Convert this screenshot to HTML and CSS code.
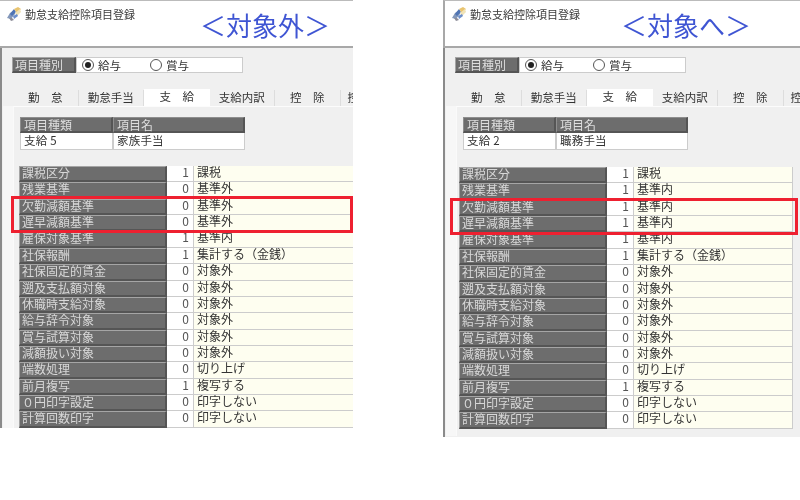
FILE: index.html
```html
<!DOCTYPE html>
<html lang="ja">
<head>
<meta charset="utf-8">
<title>勤怠支給控除項目登録</title>
<link rel="stylesheet" href="styles.css">
</head>
<body>
<svg width="0" height="0" class="defs"><defs><symbol id="logo" viewBox="0 0 14 14"><path d="M0 11 3 6l4-3 1 4-4 5z" fill="#8398bb"/><path d="M3 7l4-5 2 3-4 4z" fill="#4f74b4"/><path d="M7 2l4-2 3 2-4 4z" fill="#e9c46f"/><path d="M8 6l5-4 1 3-4 4z" fill="#f0e3b8"/><path d="M2 11l3 0 2 2-3 1z" fill="#8c8c98"/><path d="M6 9l4-2 1 2-4 3z" fill="#6b8ecb"/></symbol></defs></svg>

<section class="win win-a">
  <header class="top"><svg class="logo"><use href="#logo"/></svg><span class="title">勤怠支給控除項目登録</span><span class="note">＜対象外＞</span></header>
  <div class="body">
    <div class="kind"><span class="lbl kind-l">項目種別</span><div class="radios"><span class="radio on"></span><span class="rt">給与</span><span class="radio"></span><span class="rt">賞与</span></div></div>
    <nav class="tabs"><span class="tab">勤　怠</span><span class="tab">勤怠手当</span><span class="tab cur">支　給</span><span class="tab">支給内訳</span><span class="tab">控　除</span><span class="tab last">控</span></nav>
    <div class="pane">
      <div class="head"><span class="lbl">項目種類</span><span class="lbl">項目名</span><span class="cell">支給 5</span><span class="cell">家族手当</span></div>
      <div class="rows">
        <span class="lbl">課税区分</span><span class="n">1</span><span class="v">課税</span>
        <span class="lbl">残業基準</span><span class="n">0</span><span class="v">基準外</span>
        <span class="lbl">欠勤減額基準</span><span class="n">0</span><span class="v">基準外</span>
        <span class="lbl">遅早減額基準</span><span class="n">0</span><span class="v">基準外</span>
        <span class="lbl">雇保対象基準</span><span class="n">1</span><span class="v">基準内</span>
        <span class="lbl">社保報酬</span><span class="n">1</span><span class="v">集計する（金銭）</span>
        <span class="lbl">社保固定的賃金</span><span class="n">0</span><span class="v">対象外</span>
        <span class="lbl">遡及支払額対象</span><span class="n">0</span><span class="v">対象外</span>
        <span class="lbl">休職時支給対象</span><span class="n">0</span><span class="v">対象外</span>
        <span class="lbl">給与辞令対象</span><span class="n">0</span><span class="v">対象外</span>
        <span class="lbl">賞与試算対象</span><span class="n">0</span><span class="v">対象外</span>
        <span class="lbl">減額扱い対象</span><span class="n">0</span><span class="v">対象外</span>
        <span class="lbl">端数処理</span><span class="n">0</span><span class="v">切り上げ</span>
        <span class="lbl">前月複写</span><span class="n">1</span><span class="v">複写する</span>
        <span class="lbl">０円印字設定</span><span class="n">0</span><span class="v">印字しない</span>
        <span class="lbl">計算回数印字</span><span class="n">0</span><span class="v">印字しない</span>
      </div>
    </div>
  </div>
</section>

<section class="win win-b">
  <header class="top"><svg class="logo"><use href="#logo"/></svg><span class="title">勤怠支給控除項目登録</span><span class="note">＜対象へ＞</span></header>
  <div class="body">
    <div class="kind"><span class="lbl kind-l">項目種別</span><div class="radios"><span class="radio on"></span><span class="rt">給与</span><span class="radio"></span><span class="rt">賞与</span></div></div>
    <nav class="tabs"><span class="tab">勤　怠</span><span class="tab">勤怠手当</span><span class="tab cur">支　給</span><span class="tab">支給内訳</span><span class="tab">控　除</span><span class="tab last">控</span></nav>
    <div class="pane">
      <div class="head"><span class="lbl">項目種類</span><span class="lbl">項目名</span><span class="cell">支給 2</span><span class="cell">職務手当</span></div>
      <div class="rows">
        <span class="lbl">課税区分</span><span class="n">1</span><span class="v">課税</span>
        <span class="lbl">残業基準</span><span class="n">1</span><span class="v">基準内</span>
        <span class="lbl">欠勤減額基準</span><span class="n">1</span><span class="v">基準内</span>
        <span class="lbl">遅早減額基準</span><span class="n">1</span><span class="v">基準内</span>
        <span class="lbl">雇保対象基準</span><span class="n">1</span><span class="v">基準内</span>
        <span class="lbl">社保報酬</span><span class="n">1</span><span class="v">集計する（金銭）</span>
        <span class="lbl">社保固定的賃金</span><span class="n">0</span><span class="v">対象外</span>
        <span class="lbl">遡及支払額対象</span><span class="n">0</span><span class="v">対象外</span>
        <span class="lbl">休職時支給対象</span><span class="n">0</span><span class="v">対象外</span>
        <span class="lbl">給与辞令対象</span><span class="n">0</span><span class="v">対象外</span>
        <span class="lbl">賞与試算対象</span><span class="n">0</span><span class="v">対象外</span>
        <span class="lbl">減額扱い対象</span><span class="n">0</span><span class="v">対象外</span>
        <span class="lbl">端数処理</span><span class="n">0</span><span class="v">切り上げ</span>
        <span class="lbl">前月複写</span><span class="n">1</span><span class="v">複写する</span>
        <span class="lbl">０円印字設定</span><span class="n">0</span><span class="v">印字しない</span>
        <span class="lbl">計算回数印字</span><span class="n">0</span><span class="v">印字しない</span>
      </div>
    </div>
  </div>
</section>

<div class="mark mark-a"></div>
<div class="mark mark-b"></div>
</body>
</html>
```
FILE: styles.css
```css
* { box-sizing: border-box; }
html, body { margin: 0; padding: 0; background: #fff; }
body {
  width: 800px; height: 500px; position: relative; overflow: hidden;
  font-family: "Noto Sans CJK JP", "Noto Sans", sans-serif;
  font-size: 12px; color: #333;
}
.defs { position: absolute; }
.win { position: absolute; top: 0; overflow: hidden; filter: blur(.4px); }
.win-a { left: 0; width: 353px; height: 428px; }
.win-b { left: 443px; width: 357px; height: 437px; }
.top {
  height: 48px; background: #fff; border-bottom: 2px solid #a8a8a8; border-top: 1px solid #bbb;
  display: flex; align-items: flex-start; padding: 6px 0 0 7px;
}
.win-b .top { border-left: 2px solid #a8a8a8; padding-left: 7px; }
.logo { width: 14px; height: 14px; margin-top: 0; flex: none; }
.title { font-size: 11px; line-height: 15px; margin-left: 4px; width: 110px; color: #3a3a3a; white-space: nowrap; }
.note {
  font-size: 26px; line-height: 30px; color: #3f55d3; margin: 3px 0 0 65px; white-space: nowrap;
}
.win-b .note { margin-left: 41px; }
.body {
  height: 389px; background: #f0f0f0; padding: 9px 0 0 12px;
  border-left: 2px solid #8a8a8a;
}
.kind { display: flex; height: 16px; margin-left: -2px; width: 231px; }
.lbl {
  background: #6d6d6d; color: #dedede; padding-left: 3px; font-size: 12px; line-height: 13px;
  white-space: nowrap;
  border-top: 1px solid #a5a5a5; border-left: 1px solid #a5a5a5;
  border-bottom: 2px solid #555; border-right: 2px solid #555;
}
.kind-l { width: 64px; padding-left: 2px; }
.radios {
  flex: 1; background: #fff; border: 1px solid #ccc; display: flex; align-items: center; padding-left: 5px;
}
.radio { width: 12px; height: 12px; border-radius: 50%; border: 1px solid #555; background: #fff; flex: none; position: relative; }
.radio.on::after { content: ""; position: absolute; left: 2px; top: 2px; width: 6px; height: 6px; border-radius: 50%; background: #222; }
.rt { font-size: 11.5px; margin: 0 28px 0 4px; width: 24px; line-height: 14px; }
.tabs { display: flex; margin: 17px 0 0 -1px; height: 16px; align-items: flex-end; }
.tab {
  width: 65.5px; height: 16px; flex: none; text-align: center; font-size: 11.5px; line-height: 15px;
  background: #f0f0f0; border-right: 1px solid #ddd; color: #333; white-space: nowrap;
}
.tab.cur { background: #fff; height: 17px; border: 0; }
.tab.last { text-align: left; padding-left: 7px; border: 0; }
.pane {
  margin-left: -1px; height: 330px; padding: 10px 0 0 6px;
  border-left: 1px solid #fafafa; border-top: 1px solid #fcfcfc;
  box-shadow: -10px 0 0 #f7f7f7;
}
.head {
  display: grid; grid-template-columns: 93px 132px; grid-template-rows: 16px 16px; width: 225px;
  border-bottom: 1px solid #ccc; height: 33px;
}
.head .lbl { border-left-color: #8e8e8e; border-top-color: #8e8e8e; }
.cell {
  background: #fff; border-left: 1px solid #ccc; border-right: 1px solid #ccc;
  font-size: 11.5px; line-height: 15px; padding-left: 3px; letter-spacing: .2px;
}
.rows {
  display: grid; grid-template-columns: 148px 26px 160px; grid-auto-rows: 16.37px;
  margin: 16px 0 0 -1px; width: 334px;
}
.win-b .rows { margin-left: -4px; margin-top: 17px; }
.rows .lbl { line-height: 11px; padding-left: 2px; color: #d8d8d8; }
.n { background: #fff; text-align: right; padding-right: 4px; border-bottom: 1px solid #ccc; font-size: 12px; line-height: 12px; color: #555; }
.v { background: #fefef0; border-left: 1px solid #ccc; border-bottom: 1px solid #ccc; padding-left: 3px; font-size: 12px; line-height: 12px; white-space: nowrap; color: #333; }
.win-b .v { border-right: 1px solid #ccc; }
.mark { position: absolute; border: 3px solid #ee2030; filter: blur(.3px); }
.mark-a { left: 11px; top: 196px; width: 342px; height: 37px; }
.mark-b { left: 450px; top: 198px; width: 348px; height: 37px; }
```
